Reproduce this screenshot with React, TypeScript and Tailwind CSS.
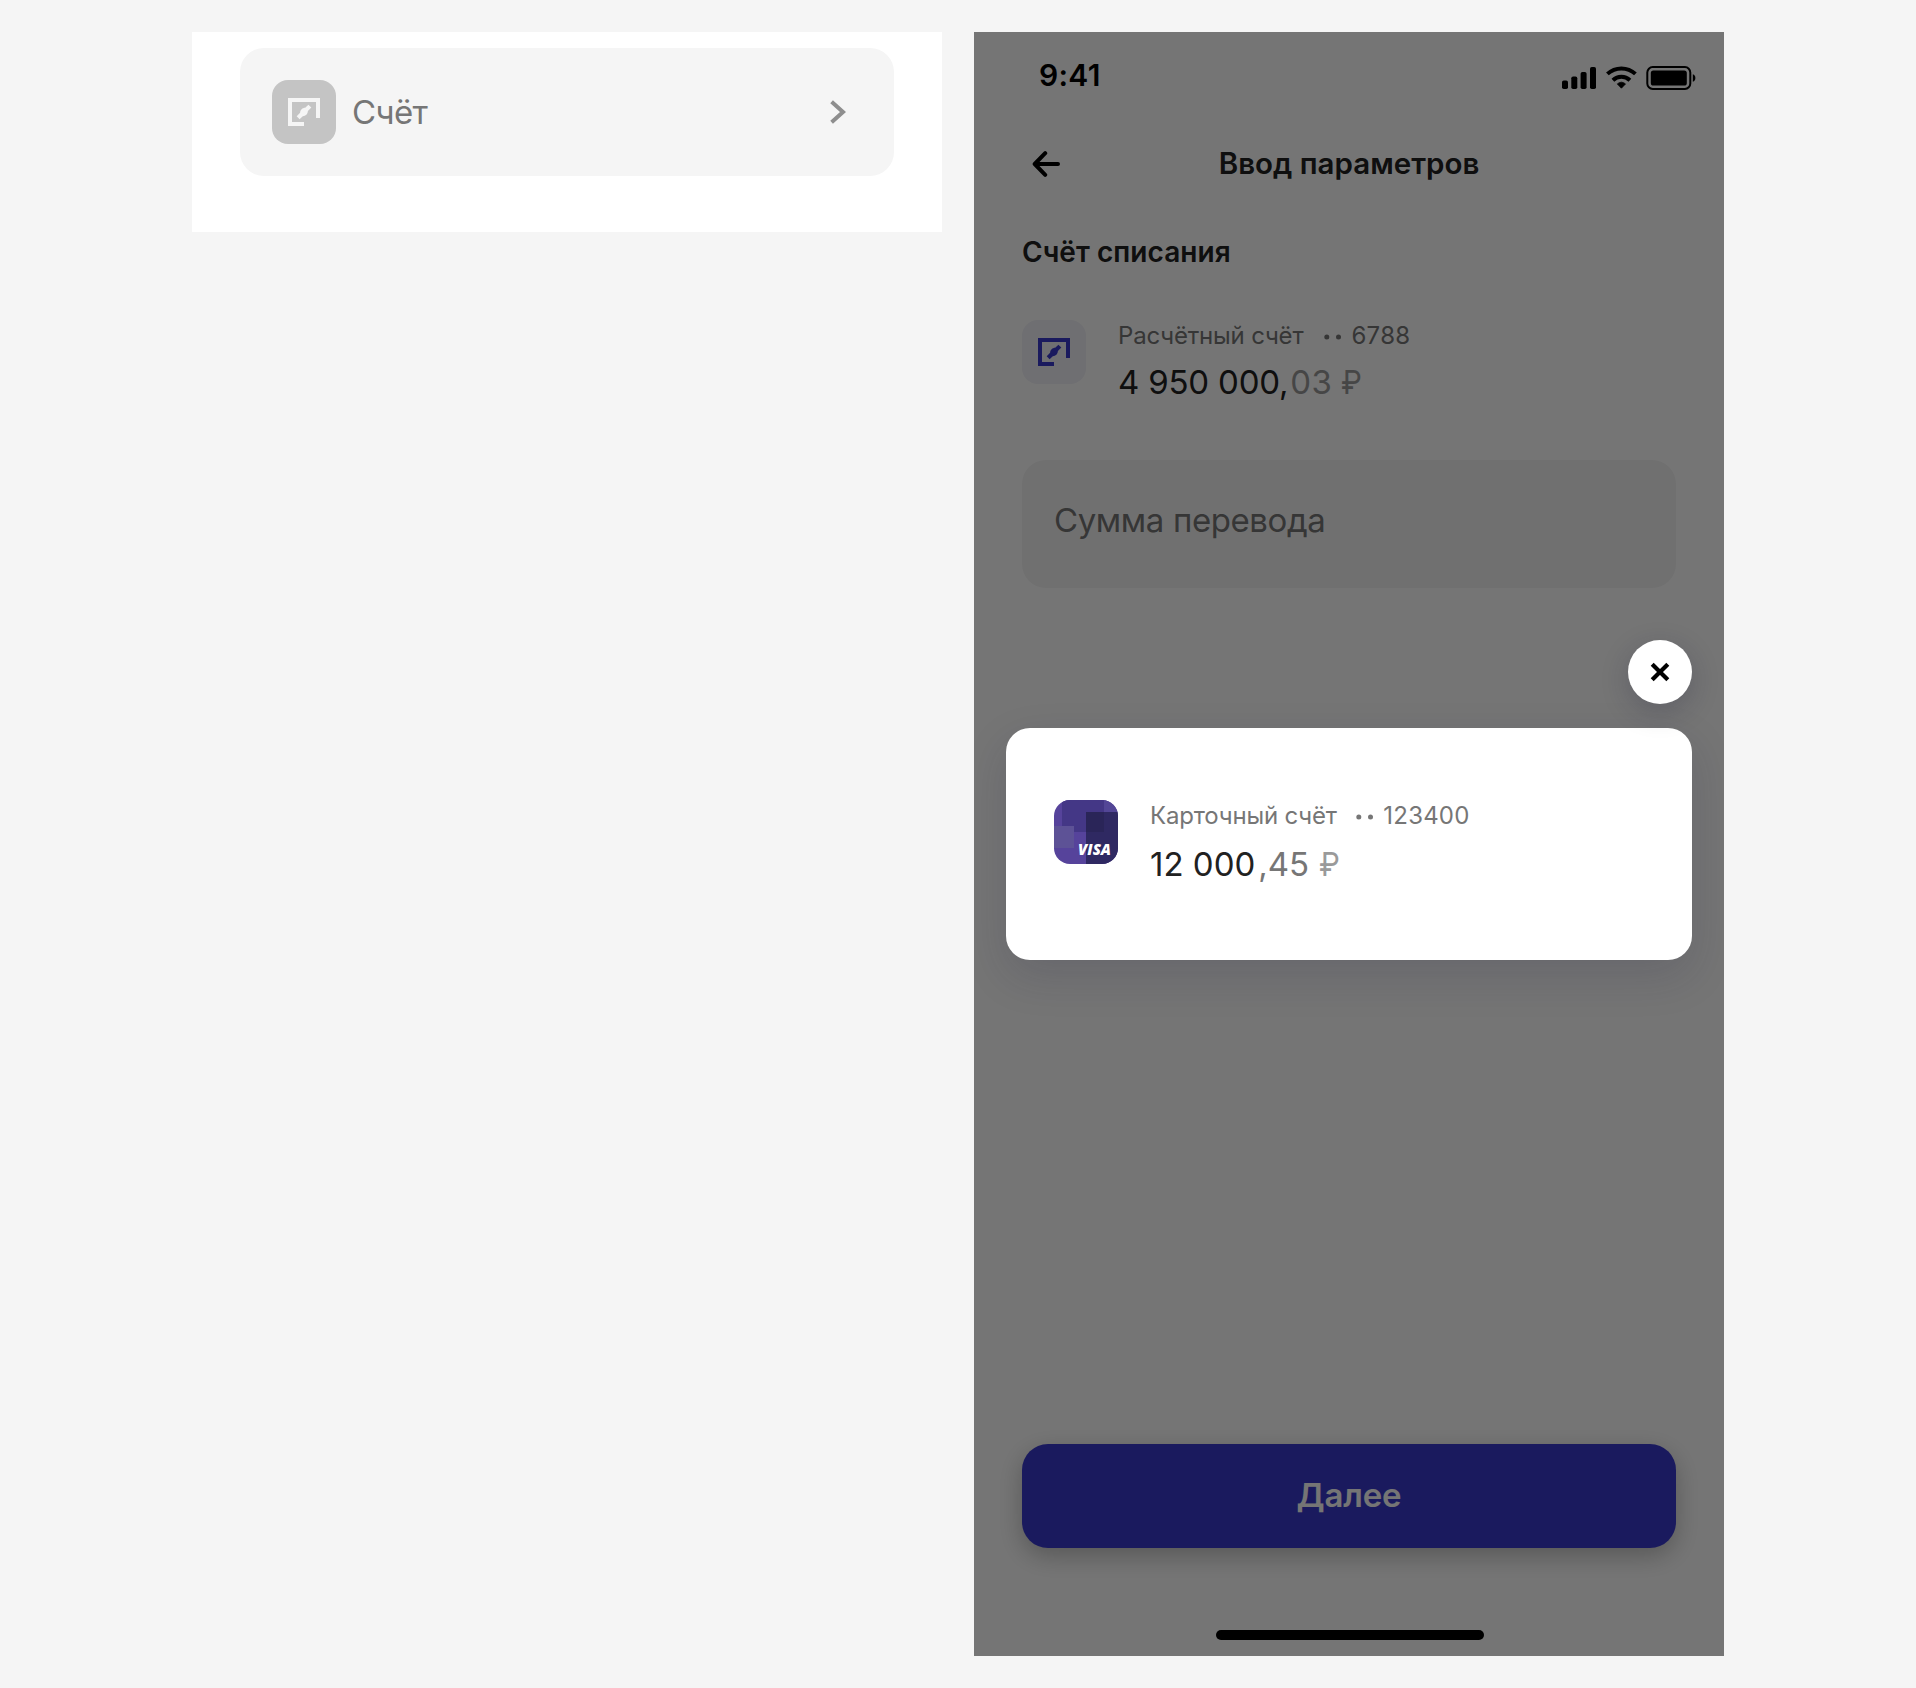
import type { ReactNode } from "react";

function AccountGlyph({ className }: { className: string }) {
  return (
    <svg viewBox="0 0 64 64" className={"block size-16 " + className} fill="currentColor">
      <path d="M16 18H48V38H44V22H20V42H32V46H16Z" />
      <path d="M24.7 36.2L28.1 32.8C28.2 30 30.4 27.8 33.2 27.8L36.4 24.7L39.3 27.6L35.9 31C35.8 34 33.6 36.1 30.8 36.2L27.6 39.3Z" />
    </svg>
  );
}

function CardGlyph() {
  return (
    <div className="relative size-16 shrink-0 overflow-hidden rounded-2xl bg-[#56439b]">
      <svg viewBox="0 0 64 64" className="block size-16" shapeRendering="crispEdges">
        <rect x="8" y="0" width="42" height="32" fill="#443786" />
        <rect x="50" y="0" width="14" height="12" fill="#534696" />
        <rect x="32" y="12" width="32" height="52" fill="#2f2962" />
        <rect x="32" y="12" width="18" height="20" fill="#2a2558" />
        <rect x="0" y="26" width="20" height="22" fill="#5d5296" />
      </svg>
      <span className="absolute right-[7px] bottom-[7px] font-['Open_Sans'] text-[15px] leading-4 font-extrabold text-white italic">
        VISA
      </span>
    </div>
  );
}

function Dots({ className }: { className: string }) {
  return (
    <svg viewBox="0 0 17 6" className={"block h-1.5 w-[17px] " + className} fill="currentColor">
      <circle cx="2.8" cy="3" r="2.5" />
      <circle cx="14.5" cy="3" r="2.5" />
    </svg>
  );
}

function Ruble({ className }: { className: string }) {
  return <span className={"inline-block origin-left scale-x-90 " + className}>₽</span>;
}

function StatusBar() {
  return (
    <div className="flex h-[88px] shrink-0 justify-between pr-[26px] pl-[65px] text-black">
      <span className="mt-[23px] text-[30px] leading-10 font-semibold tracking-[0.3px]">9:41</span>
      <svg viewBox="0 0 136 24" className="mt-[34px] block h-6 w-[136px]">
        <rect x="0" y="14.5" width="6" height="8.5" rx="1.8" />
        <rect x="9.3" y="10.5" width="6" height="12.5" rx="1.8" />
        <rect x="18.6" y="6" width="6" height="17" rx="1.8" />
        <rect x="28" y="1" width="6" height="22" rx="1.8" />
        <path d="M59.4 22.2L55.3 17.9A6.4 6.4 0 0 1 63.5 17.9Z" strokeLinejoin="round" stroke="black" strokeWidth="0.8" />
        <path d="M50.9 14.2A12.4 12.4 0 0 1 67.9 14.2" fill="none" stroke="black" strokeWidth="4" />
        <path d="M45.4 7.9A20.6 20.6 0 0 1 73.4 7.9" fill="none" stroke="black" strokeWidth="4" />
        <rect x="85.3" y="1.1" width="43" height="21.8" rx="5.4" fill="none" stroke="black" strokeWidth="2" />
        <rect x="88.8" y="4.5" width="36" height="15" rx="2.6" />
        <path d="M130.8 8.2C132.6 8.8 133.4 10.3 133.4 12C133.4 13.7 132.6 15.2 130.8 15.8Z" />
      </svg>
    </div>
  );
}

function AccountText({ children }: { children: ReactNode }) {
  return <div className="ml-8 flex flex-col">{children}</div>;
}

function Phone() {
  return (
    <div className="relative flex h-[1624px] w-[750px] flex-col overflow-hidden bg-white text-[#212121]">
      <StatusBar />
      <div className="relative flex h-[88px] shrink-0 items-center justify-center">
        <svg viewBox="0 0 28 26" className="absolute left-[58px] block h-[26px] w-7" fill="none" stroke="black" strokeWidth="4" strokeLinecap="round">
          <path d="M3.5 13H26M13.2 2.2L2.7 13L13.2 23.8" strokeLinejoin="round" />
        </svg>
        <h1 className="mb-0.5 text-[29.5px] leading-10 font-semibold">Ввод параметров</h1>
      </div>
      <h2 className="flex h-[88px] shrink-0 items-center pl-12 text-[28px] leading-10 font-semibold tracking-[0.05px]">
        Счёт списания
      </h2>
      <div className="mt-6 flex pl-12">
        <div className="size-16 rounded-2xl bg-[#f1f1f8]">
          <AccountGlyph className="text-[#3a3ace]" />
        </div>
        <AccountText>
          <div className="flex h-8 items-center text-2xl leading-8 text-[#767676]">
            <span className="tracking-[-0.18px]">Расчётный счёт</span>
            <Dots className="mt-0.5 ml-[21px]" />
            <span className="ml-[10px] tracking-[0.3px]">6788</span>
          </div>
          <div className="mt-[10px] flex h-10 items-center text-[33px] leading-10 tracking-[-0.2px]">
            <span>4 950 000,</span>
            <span className="ml-0.5 tracking-[0.4px] text-[#9a9a9a]">03</span>
            <Ruble className="ml-[9px] text-[#9a9a9a]" />
          </div>
        </AccountText>
      </div>
      <div className="mx-12 mt-[58px] flex h-32 shrink-0 items-center rounded-3xl bg-[#f5f5f5] pb-2 pl-8 text-[33px] leading-10 tracking-[-0.4px] text-[#767676]">
        Сумма перевода
      </div>
      <button className="mx-12 mt-auto h-[104px] shrink-0 rounded-[26px] bg-[#3a3ace] text-[33px] font-semibold tracking-[-0.15px] text-white shadow-[0_8px_24px_rgba(0,0,0,0.25)]">
        Далее
      </button>
      <div className="mt-[82px] mb-4 ml-[242px] h-2.5 w-[268px] shrink-0 rounded-full bg-black" />

      <div className="absolute inset-0 flex flex-col items-end gap-6 bg-black/54 px-8 pt-[608px]">
        <button className="relative z-10 flex size-16 items-center justify-center rounded-full bg-white shadow-[0_8px_28px_rgba(30,30,60,0.24)]">
          <svg viewBox="0 0 20 20" className="block size-5" stroke="black" strokeWidth="4.2">
            <path d="M2.2 2.2L17.8 17.8M17.8 2.2L2.2 17.8" />
          </svg>
        </button>
        <div className="flex h-[232px] w-full rounded-3xl bg-white px-12 pt-[72px] shadow-[0_16px_44px_rgba(30,30,60,0.16)]">
          <CardGlyph />
          <AccountText>
            <div className="flex h-8 items-center text-2xl leading-8 text-[#767676]">
              <span className="tracking-[-0.18px]">Карточный счёт</span>
              <Dots className="mt-0.5 ml-[19.5px]" />
              <span className="ml-[10px] tracking-[0.2px]">123400</span>
            </div>
            <div className="mt-3 flex h-10 items-center text-[33px] leading-10">
              <span>12 000</span>
              <span className="ml-[3px] text-[#767676]">,45</span>
              <Ruble className="ml-[10px] text-[#9a9a9a]" />
            </div>
          </AccountText>
        </div>
      </div>
    </div>
  );
}

export default function App() {
  return (
    <main className="flex h-[1688px] items-start gap-8 bg-[#f5f5f5] pt-8 pl-48 font-['Inter',sans-serif]">
      <section className="h-[200px] w-[750px] bg-white px-12 pt-4">
        <div className="flex h-32 items-center rounded-3xl bg-[#f5f5f5] pr-12 pl-8">
          <div className="size-16 rounded-2xl bg-[#c4c4c4]">
            <AccountGlyph className="text-[#f5f5f5]" />
          </div>
          <span className="ml-4 text-[33px] leading-10 tracking-[-0.6px] text-[#767676]">Счёт</span>
          <svg viewBox="0 0 16 24" className="ml-auto block h-6 w-4" fill="none" stroke="#8e8e8e" strokeWidth="4">
            <path d="M1.6 1.8L13 12L1.6 22.2" />
          </svg>
        </div>
      </section>
      <Phone />
    </main>
  );
}
